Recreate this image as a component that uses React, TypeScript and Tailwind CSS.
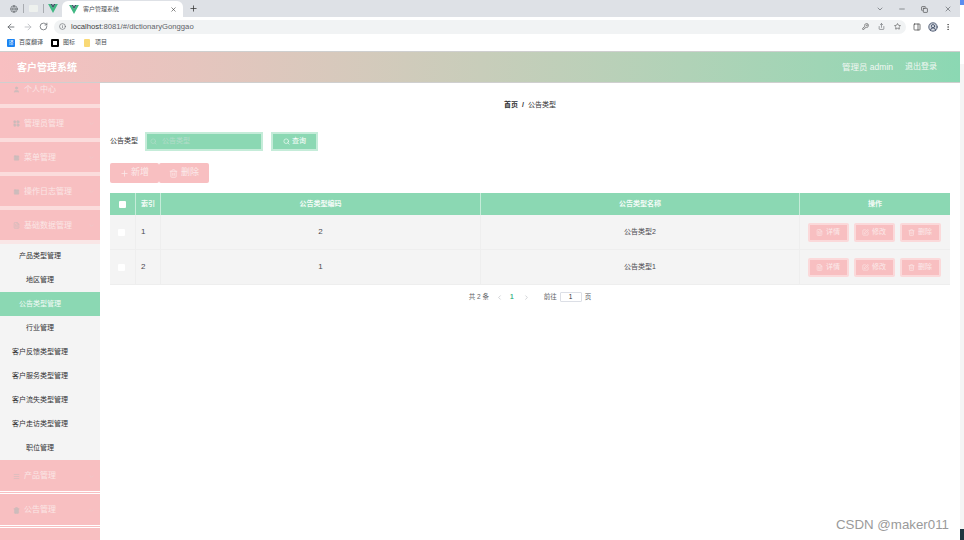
import { ArrowLeft, ArrowRight, ChevronDown, ChevronLeft, ChevronRight, CircleUserRound, Copy, Edit, FileText, Globe, Info, KeyRound, LayoutGrid, Menu, Minus, MoreVertical, PanelRight, Plus, RotateCw, Search, Share, Square, Star, Trash2, User, X } from "lucide-react";

const topMenus = ["管理员管理", "菜单管理", "操作日志管理", "基础数据管理"];
const subMenus = ["产品类型管理", "地区管理", "公告类型管理", "行业管理", "客户反馈类型管理", "客户服务类型管理", "客户流失类型管理", "客户走访类型管理", "职位管理"];
const rows = [
  { index: 1, code: 2, name: "公告类型2" },
  { index: 2, code: 1, name: "公告类型1" },
];

function VueLogo() {
  return (
    <svg viewBox="0 0 12 11" className="h-[9px] w-[10px]">
      <path d="M0 0h3l3 5 3-5h3L6 11z" fill="#41b883" />
      <path d="M3 0h2l1 2 1-2h2L6 5z" fill="#34495e" />
    </svg>
  );
}

function SideItem({ label, icon, className = "h-[30px]" }: { label: string; icon: React.ReactNode; className?: string }) {
  return (
    <div className={`flex ${className} items-center bg-[#f8bfc1] pl-[11px] pr-[5px] pt-[1px] text-[8px] text-[#fbe6e6]`}>
      <span className="flex w-[10px] justify-center text-[#cdbcbc]">{icon}</span>
      <span className="ml-[3px]">{label}</span>
      <ChevronDown className="ml-auto h-[7px] w-[7px] text-[#eec9ca]" />
    </div>
  );
}

function ActionButton({ icon, label }: { icon: React.ReactNode; label: string }) {
  return (
    <div className="flex h-[19px] w-[41px] items-center justify-center gap-[3px] rounded-[2px] border-2 border-[#fbd9da] bg-[#f8bfc1] text-[7px] text-[#fbeaea]">
      {icon}
      {label}
    </div>
  );
}

export default function App() {
  return (
    <div className="flex h-[540px] w-[964px] overflow-hidden bg-white font-['Liberation_Sans','Noto_Sans_CJK_SC',sans-serif]">
      <div className="flex w-[960px] flex-col">
        <div className="flex h-[17px] items-end bg-[#dee1e6] pl-[10px] text-[#5f6368]">
          <Globe className="mb-[4px] h-[8px] w-[8px]" />
          <div className="mb-[4px] ml-[5px] h-[9px] w-px bg-[#a8abb0]" />
          <div className="mb-[5px] ml-[5px] h-[7px] w-[9px] rounded-[1px] bg-[#eef1ee]" />
          <div className="mb-[4px] ml-[5px] h-[9px] w-px bg-[#a8abb0]" />
          <div className="mb-[4px] ml-[4px]"><VueLogo /></div>
          <div className="ml-[4px] flex h-[16px] w-[121px] items-center rounded-t-[6px] bg-white pl-[7px] pr-[6px]">
            <VueLogo />
            <span className="ml-[4px] text-[6px] text-[#4b4f54]">客户管理系统</span>
            <X className="ml-auto h-[7px] w-[7px] text-[#333]" />
          </div>
          <Plus className="mb-[4px] ml-[6px] h-[9px] w-[9px] text-[#333]" />
          <ChevronDown className="mb-[4px] ml-auto h-[8px] w-[8px]" />
          <Minus className="mb-[4px] ml-[14px] h-[8px] w-[8px]" />
          <Copy className="mb-[4px] ml-[15px] h-[7px] w-[7px] text-[#333]" />
          <X className="mb-[4px] ml-[16px] mr-[8px] h-[8px] w-[8px]" />
        </div>
        <div className="flex h-[17px] items-center bg-white pl-[6px] pt-[2px] text-[#5f6368]">
          <ArrowLeft className="h-[10px] w-[10px]" />
          <ArrowRight className="ml-[7px] h-[10px] w-[10px] text-[#b8bbbf]" />
          <RotateCw className="ml-[6px] h-[9px] w-[9px]" />
          <div className="ml-[6px] flex h-[14px] w-[852px] items-center rounded-full bg-[#f1f3f4] pl-[5px] pr-[5px]">
            <Info className="h-[7px] w-[7px]" />
            <span className="ml-[5px] text-[7.7px]">
              <span className="text-[#3c4043]">localhost</span>:8081/#/dictionaryGonggao
            </span>
            <KeyRound className="ml-auto h-[7px] w-[7px] text-[#444]" />
            <Share className="ml-[9px] h-[7px] w-[7px]" />
            <Star className="ml-[9px] h-[7px] w-[7px] text-[#444]" />
          </div>
          <PanelRight className="ml-[7px] h-[8px] w-[8px] text-[#333]" />
          <CircleUserRound className="ml-[7px] h-[10px] w-[10px] rounded-full bg-[#d9dce3] text-[#3c4a63]" />
          <MoreVertical className="ml-[6px] h-[8px] w-[8px] text-[#444]" />
        </div>
        <div className="flex h-[17px] items-center bg-white pl-[7px] text-[6px] text-[#4b4f54]">
          <span className="flex h-[8px] w-[8px] items-center justify-center rounded-[1px] bg-[#1a83f2] text-[5px] text-white">译</span>
          <span className="ml-[4px] w-[24px]">百度翻译</span>
          <span className="ml-[8px] h-[8px] w-[8px] rounded-[1px] border-2 border-black bg-white" />
          <span className="ml-[4px] w-[12px]">图标</span>
          <span className="ml-[9px] h-[8px] w-[6px] rounded-[1px] bg-[#f9d976]" />
          <span className="ml-[5px]">项目</span>
        </div>
        <div className="flex h-[32px] items-center border-y border-[#cfcfcf] bg-gradient-to-r from-[#f8bfc1] to-[#8bd8b3] pl-[17px] pr-[23px] text-white">
          <span className="text-[10px] font-bold">客户管理系统</span>
          <span className="ml-auto text-[8.5px] text-[#f1f7f3]">管理员 admin</span>
          <span className="ml-[12px] text-[8px] text-[#f1f7f3]">退出登录</span>
        </div>

        <div className="flex min-h-0 flex-1">
          <aside className="flex w-[100px] flex-col overflow-hidden bg-white">
            <SideItem label="个人中心" icon={<User className="h-[7px] w-[7px] fill-current" />} className="-mt-[9px] h-[30px] shrink-0" />
            {topMenus.map((label, i) => (
              <div key={label} className="border-t-4 border-[#fbdcdc]">
                <SideItem
                  label={label}
                  icon={i === 0 ? <LayoutGrid className="h-[7px] w-[7px] fill-current" /> : i === 3 ? <FileText className="h-[7px] w-[7px]" /> : <Square className="h-[6px] w-[7px] fill-current" />}
                />
              </div>
            ))}
            <div className="h-[4px] bg-[#f9e6e6]" />
            <div className="bg-[#f4f4f4]">
              {subMenus.map((label) => (
                <div
                  key={label}
                  className={`flex h-[24px] items-center justify-center pr-[20px] text-[7px] ${label === "公告类型管理" ? "bg-[#8bd8b3] text-[#f4fbf7]" : "text-[#303133]"}`}
                >
                  {label}
                </div>
              ))}
            </div>
            <SideItem label="产品管理" icon={<Menu className="h-[7px] w-[7px]" />} className="h-[31px] shrink-0" />
            <div className="h-[3px] border-y border-white bg-[#f8bfc1]" />
            <SideItem label="公告管理" icon={<Trash2 className="h-[7px] w-[7px] fill-current" />} className="h-[31px] shrink-0" />
            <div className="h-[3px] border-y border-white bg-[#f8bfc1]" />
            <div className="flex-1 bg-[#f8bfc1]" />
          </aside>

          <main className="relative flex-1 bg-white px-[10px] pt-[17px]">
            <div className="flex h-[10px] items-center justify-center gap-[4px] text-[7px] text-[#303133]">
              <span className="font-bold">首页</span>
              <span className="font-bold">/</span>
              <span>公告类型</span>
            </div>
            <div className="mt-[22px] flex h-[19px] items-center">
              <span className="w-[35px] text-[7px] text-[#303133]">公告类型</span>
              <div className="flex h-[19px] w-[118px] items-center border-2 border-[#c5ecd9] bg-[#8bd8b3] pl-[3px] text-[7px] text-[#b4dcca]">
                <Search className="h-[7px] w-[7px]" />
                <span className="ml-[5px]">公告类型</span>
              </div>
              <div className="ml-[8px] flex h-[19px] w-[47px] items-center justify-center gap-[2px] border-2 border-[#c5ecd9] bg-[#8bd8b3] text-[7px] text-white">
                <Search className="h-[7px] w-[7px]" />
                查询
              </div>
            </div>
            <div className="mt-[12px] flex h-[20px] items-center text-[9px] text-[#fbeaea]">
              <div className="flex h-[20px] w-[49px] items-center justify-center gap-[2px] rounded-[2px] bg-[#f8bfc1]">
                <Plus className="h-[9px] w-[9px]" />
                新增
              </div>
              <div className="flex h-[20px] w-[50px] items-center justify-center gap-[3px] rounded-[2px] bg-[#f8bfc1]">
                <Trash2 className="h-[9px] w-[9px]" />
                删除
              </div>
            </div>

            <div className="mt-[10px] w-[840px]">
              <div className="flex h-[22px] bg-[#8bd8b3] text-[7px] font-bold text-[#f4fbf7]">
                <div className="flex w-[26px] items-center justify-center border-r border-[#c5ecd9]">
                  <span className="h-[7px] w-[7px] rounded-[1px] bg-white" />
                </div>
                <div className="flex w-[25px] items-center justify-center border-r border-[#c5ecd9]">索引</div>
                <div className="flex w-[320px] items-center justify-center border-r border-[#c5ecd9]">公告类型编码</div>
                <div className="flex w-[319px] items-center justify-center border-r border-[#c5ecd9]">公告类型名称</div>
                <div className="flex flex-1 items-center justify-center">操作</div>
              </div>
              {rows.map((row) => (
                <div key={row.index} className="flex h-[35px] border-b border-[#eeeeee] bg-[#f4f4f4] text-[8px] text-[#4a4a4f]">
                  <div className="flex w-[26px] items-center justify-center border-r border-[#eeeeee]">
                    <span className="-ml-[2px] h-[7px] w-[7px] rounded-[1px] bg-white" />
                  </div>
                  <div className="flex w-[25px] items-center border-r border-[#eeeeee] pl-[5px]">{row.index}</div>
                  <div className="flex w-[320px] items-center justify-center border-r border-[#eeeeee]">{row.code}</div>
                  <div className="flex w-[319px] items-center justify-center border-r border-[#eeeeee] text-[7px]">{row.name}</div>
                  <div className="flex flex-1 items-center justify-center gap-[5px] pr-[2px]">
                    <ActionButton icon={<FileText className="h-[7px] w-[7px]" />} label="详情" />
                    <ActionButton icon={<Edit className="h-[7px] w-[7px]" />} label="修改" />
                    <ActionButton icon={<Trash2 className="h-[7px] w-[7px]" />} label="删除" />
                  </div>
                </div>
              ))}
            </div>

            <div className="mt-[7px] flex h-[10px] w-[840px] items-center justify-center text-[6.5px] text-[#606266]">
              <span>共 2 条</span>
              <ChevronLeft className="ml-[7px] h-[7px] w-[7px] text-[#b5b8bd]" />
              <span className="ml-[7px] font-bold text-[#3fb58a]">1</span>
              <ChevronRight className="ml-[9px] h-[7px] w-[7px] text-[#b5b8bd]" />
              <span className="ml-[14px]">前往</span>
              <span className="ml-[3px] flex h-[10px] w-[22px] items-center justify-center rounded-[1px] border border-[#dcdfe6] text-[#303133]">1</span>
              <span className="ml-[3px]">页</span>
            </div>

            <span className="absolute right-[11px] top-[432px] text-[13.3px] text-[#9a9a9a]">CSDN @maker011</span>
          </main>
        </div>
      </div>
      <div className="flex w-[4px] flex-col bg-[#f5f5f5]">
        <div className="h-[5px] bg-[#5b8def]" />
        <div className="h-[59px] bg-white" />
        <div className="flex-1" />
        <div className="h-[11px] bg-[#1f3640]" />
      </div>
    </div>
  );
}
